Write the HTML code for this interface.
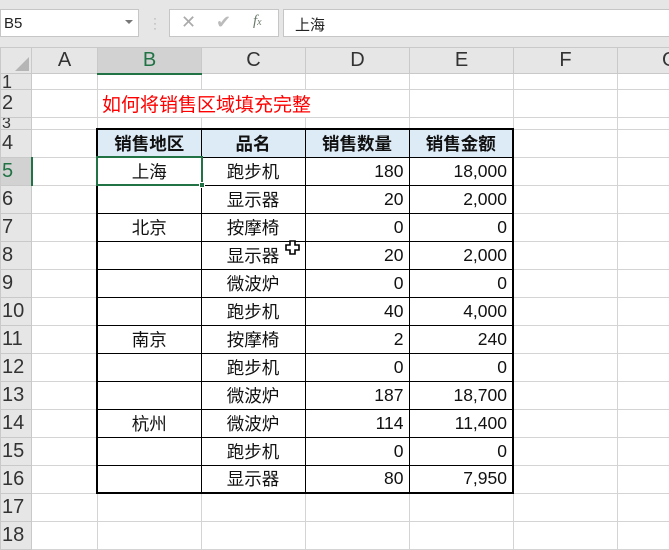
<!DOCTYPE html>
<html><head><meta charset="utf-8"><style>
*{margin:0;padding:0;box-sizing:border-box}
body{width:669px;height:545px;overflow:hidden;background:#fff;font-family:"Liberation Sans","Noto Sans CJK SC",sans-serif;position:relative}
.top{position:absolute;left:0;top:0;width:669px;height:47px;background:#e6e6e6}
.box{position:absolute;background:#fff;border:1px solid #c6c6c6}
.g{position:absolute;left:0;top:47px;width:677px;border-collapse:collapse;table-layout:fixed}
.g td{border:1px solid #d4d4d4;padding:0;font-size:19px;color:#222;text-align:center;overflow:hidden;white-space:nowrap}
.g td.rh{background:#e6e6e6;border-color:#c9c9c9;text-align:left;padding-left:1px;font-size:20px;color:#333}
.g tr.ch td{background:#e6e6e6;border-color:#c9c9c9;font-size:20px;color:#333}
.d{position:absolute;left:96px;top:128px;width:418px;border-collapse:collapse;table-layout:fixed;border:2px solid #000}
.d td{border:1px solid #000;height:28px;font-size:17.5px;color:#111;padding:0 5px;white-space:nowrap;font-family:"Liberation Sans","Noto Sans CJK SC",sans-serif}
.d td.c{text-align:center}.d td.r{text-align:right}
.d tr.h td{background:#ddebf7;font-weight:bold;text-align:center}
</style></head><body>
<div class="top"></div>
<div class="box" style="left:0;top:9px;width:139px;height:28px;font-size:15px;padding:5px 0 0 3px;color:#222">B5<span style="position:absolute;right:5px;top:10px;width:0;height:0;border-left:4px solid transparent;border-right:4px solid transparent;border-top:4px solid #777"></span></div>
<div style="position:absolute;left:153px;top:16px;color:#aaa;font-size:12px;line-height:5px">·<br>·<br>·</div>
<div class="box" style="left:169px;top:9px;width:110px;height:28px"><span style="position:absolute;left:11px;top:2px;color:#aaa;font-size:18px">✕</span><span style="position:absolute;left:46px;top:2px;color:#bbb;font-size:18px">✔</span><span style="position:absolute;left:83px;top:3px;color:#6a7a6a;font-style:italic;font-family:'Liberation Serif',serif;font-size:15px">f<small style="font-size:10px">x</small></span></div>
<div class="box" style="left:283px;top:9px;width:390px;height:28px;font-size:15px;padding:4px 0 0 11px;color:#222">上海</div>
<table class="g">
<colgroup><col style="width:31px"><col style="width:66px"><col style="width:104px"><col style="width:104px"><col style="width:104px"><col style="width:104px"><col style="width:104px"><col style="width:60px"></colgroup>
<tr class="ch" style="height:26px"><td style="position:relative"><span style="position:absolute;right:2px;bottom:2px;width:0;height:0;border-left:14px solid transparent;border-bottom:14px solid #b5b5b5"></span></td><td>A</td><td style="background:#d2d2d2;border-bottom:2px solid #217346;color:#217346">B</td><td>C</td><td>D</td><td>E</td><td>F</td><td style="text-align:left;padding-left:44px">G</td></tr>
<tr style="height:16px"><td class="rh" style="line-height:14px;font-size:18px">1</td><td></td><td></td><td></td><td></td><td></td><td></td><td></td></tr>
<tr style="height:28px"><td class="rh">2</td><td></td><td colspan="3" style="text-align:left;padding-left:4px;color:#f00;font-size:19px">如何将销售区域填充完整</td><td></td><td></td><td></td></tr>
<tr style="height:12px"><td class="rh" style="line-height:10px;font-size:16px">3</td><td></td><td></td><td></td><td></td><td></td><td></td><td></td></tr>
<tr style="height:28px"><td class="rh">4</td><td></td><td></td><td></td><td></td><td></td><td></td><td></td></tr>
<tr style="height:28px"><td class="rh" style="background:#d2d2d2;border-right:2px solid #217346;color:#217346">5</td><td></td><td></td><td></td><td></td><td></td><td></td><td></td></tr>
<tr style="height:28px"><td class="rh">6</td><td></td><td></td><td></td><td></td><td></td><td></td><td></td></tr>
<tr style="height:28px"><td class="rh">7</td><td></td><td></td><td></td><td></td><td></td><td></td><td></td></tr>
<tr style="height:28px"><td class="rh">8</td><td></td><td></td><td></td><td></td><td></td><td></td><td></td></tr>
<tr style="height:28px"><td class="rh">9</td><td></td><td></td><td></td><td></td><td></td><td></td><td></td></tr>
<tr style="height:28px"><td class="rh">10</td><td></td><td></td><td></td><td></td><td></td><td></td><td></td></tr>
<tr style="height:28px"><td class="rh">11</td><td></td><td></td><td></td><td></td><td></td><td></td><td></td></tr>
<tr style="height:28px"><td class="rh">12</td><td></td><td></td><td></td><td></td><td></td><td></td><td></td></tr>
<tr style="height:28px"><td class="rh">13</td><td></td><td></td><td></td><td></td><td></td><td></td><td></td></tr>
<tr style="height:28px"><td class="rh">14</td><td></td><td></td><td></td><td></td><td></td><td></td><td></td></tr>
<tr style="height:28px"><td class="rh">15</td><td></td><td></td><td></td><td></td><td></td><td></td><td></td></tr>
<tr style="height:28px"><td class="rh">16</td><td></td><td></td><td></td><td></td><td></td><td></td><td></td></tr>
<tr style="height:28px"><td class="rh">17</td><td></td><td></td><td></td><td></td><td></td><td></td><td></td></tr>
<tr style="height:28px"><td class="rh">18</td><td></td><td></td><td></td><td></td><td></td><td></td><td></td></tr>
</table>
<table class="d">
<colgroup><col style="width:104px"><col style="width:104px"><col style="width:104px"><col style="width:104px"></colgroup>
<tr class="h"><td>销售地区</td><td>品名</td><td>销售数量</td><td>销售金额</td></tr>
<tr><td class="c">上海</td><td class="c">跑步机</td><td class="r">180</td><td class="r">18,000</td></tr>
<tr><td></td><td class="c">显示器</td><td class="r">20</td><td class="r">2,000</td></tr>
<tr><td class="c">北京</td><td class="c">按摩椅</td><td class="r">0</td><td class="r">0</td></tr>
<tr><td></td><td class="c">显示器</td><td class="r">20</td><td class="r">2,000</td></tr>
<tr><td></td><td class="c">微波炉</td><td class="r">0</td><td class="r">0</td></tr>
<tr><td></td><td class="c">跑步机</td><td class="r">40</td><td class="r">4,000</td></tr>
<tr><td class="c">南京</td><td class="c">按摩椅</td><td class="r">2</td><td class="r">240</td></tr>
<tr><td></td><td class="c">跑步机</td><td class="r">0</td><td class="r">0</td></tr>
<tr><td></td><td class="c">微波炉</td><td class="r">187</td><td class="r">18,700</td></tr>
<tr><td class="c">杭州</td><td class="c">微波炉</td><td class="r">114</td><td class="r">11,400</td></tr>
<tr><td></td><td class="c">跑步机</td><td class="r">0</td><td class="r">0</td></tr>
<tr><td></td><td class="c">显示器</td><td class="r">80</td><td class="r">7,950</td></tr>
</table>
<div style="position:absolute;left:96px;top:156px;width:107px;height:30px;border:2px solid #217346"></div>
<div style="position:absolute;left:199px;top:182px;width:6px;height:6px;background:#217346;border:1px solid #fff"></div>
<svg style="position:absolute;left:285px;top:240px" width="16" height="16" viewBox="0 0 16 16"><path d="M5 1h5v4h4v5h-4v4H5v-4H1V5h4z" fill="#fff" stroke="#000" stroke-width="1.6"/></svg>
</body></html>
